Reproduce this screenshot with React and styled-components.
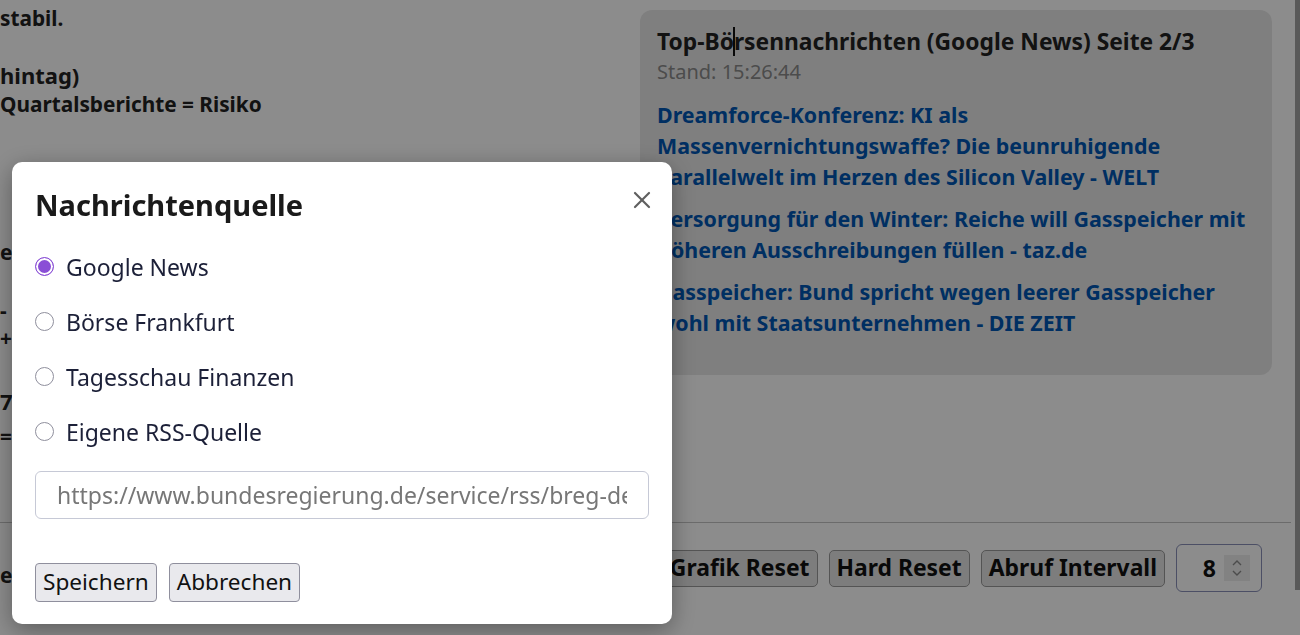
import React from "react";
import styled, { createGlobalStyle } from "styled-components";

const Global = createGlobalStyle`
  html, body {
    margin: 0;
    padding: 0;
    background: #ffffff;
    font-family: "Noto Sans", "Open Sans", sans-serif;
    color: #222;
  }
  * { box-sizing: border-box; }
`;

const Viewport = styled.div`
  height: 100vh;
  overflow: hidden;
  display: flex;
`;

const ScrollTrack = styled.div`
  width: 5px;
  flex: none;
`;

const ScrollThumb = styled.div`
  height: 590px;
  background: #a3a3a3;
`;

const Page = styled.div`
  flex: 1;
  min-width: 0;
  display: flex;
  flex-direction: column;
`;

const Main = styled.div`
  display: grid;
  grid-template-columns: 1fr 632px;
  column-gap: 40px;
  padding: 10px 23px 0 0;
  height: 522px;
`;

const LeftCol = styled.div`
  margin: -6px 0 0 -302px;
  white-space: nowrap;
`;

/* label column is scrolled out of view on the left, only the values show */
const InfoRow = styled.div`
  display: grid;
  grid-template-columns: 302px auto;
  font-size: ${(p) => (p.$heading ? 22 : 20.8)}px;
  font-weight: 700;
  line-height: ${(p) => (p.$heading ? 30 : 28)}px;
  margin-top: ${(p) => p.$gap || 0}px;
`;

const InfoLabel = styled.span`
  overflow: hidden;
`;

const Card = styled.section`
  background: #e8e8e8;
  border-radius: 12px;
  padding: 17px 16px 37px 17px;
  align-self: start;
`;

const CardTitle = styled.h2`
  margin: 0;
  font-size: 22.8px;
  font-weight: 700;
  line-height: 30px;
  color: #222;
`;

const Caret = styled.span`
  display: inline-block;
  width: 0;
  height: 29px;
  border-left: 2px solid #111;
  vertical-align: -6px;
  margin: 0 -1px;
`;

const Stand = styled.div`
  font-size: 20px;
  line-height: 28px;
  color: #8a8a8a;
  margin: 1px 0 13px;
`;

const NewsList = styled.ul`
  list-style: none;
  margin: 0;
  padding: 0;
  display: flex;
  flex-direction: column;
  gap: 11px;
`;

const NewsLink = styled.a`
  display: block;
  font-size: 21.4px;
  font-weight: 700;
  line-height: 31px;
  color: #0056b3;
  text-decoration: none;
`;

const Footer = styled.footer`
  border-top: 1px solid #c4c4c4;
  margin-right: 4px;
  display: flex;
  align-items: center;
  justify-content: space-between;
  padding: 21px 29px 0 0;
`;

const FooterLeft = styled.div`
  margin: 14px 0 0 -302px;
  white-space: nowrap;
`;

const FooterRight = styled.div`
  display: flex;
  align-items: center;
  gap: 11px;
`;

const ToolButton = styled.button`
  font-family: inherit;
  font-size: 22.9px;
  font-weight: 700;
  color: #111;
  background: #e4e4e4;
  border: 1px solid #9a9a9a;
  border-radius: 5px;
  height: 37px;
  padding: 0 7px;
  line-height: 1;
`;

const NumberBox = styled.div`
  width: 86px;
  height: 48px;
  border: 1px solid #8a90b8;
  border-radius: 6px;
  display: flex;
  align-items: center;
  justify-content: flex-end;
  gap: 8px;
  padding-right: 11px;
  font-size: 23px;
  font-weight: 700;
  color: #111;
`;

const Spinner = styled.div`
  width: 26px;
  height: 26px;
  background: #ededed;
  display: flex;
  align-items: center;
  justify-content: center;
`;

const Overlay = styled.div`
  position: fixed;
  inset: 0;
  background: rgba(0, 0, 0, 0.45);
  display: flex;
  align-items: flex-start;
  padding: 162px 0 0 12px;
`;

const Modal = styled.div`
  width: 660px;
  background: #ffffff;
  border-radius: 10px;
  box-shadow: 0 6px 24px rgba(0, 0, 0, 0.35);
  padding: 24px 23px 22px;
  color: #1c2038;
`;

const ModalHeader = styled.div`
  display: flex;
  align-items: center;
  justify-content: space-between;
`;

const ModalTitle = styled.h2`
  margin: 0;
  font-size: 29px;
  font-weight: 700;
  line-height: 38px;
  color: #1a1a1a;
`;

const CloseButton = styled.button`
  background: none;
  border: none;
  padding: 0;
  width: 24px;
  height: 24px;
  display: flex;
  align-items: center;
  justify-content: center;
  margin-top: -10px;
  margin-right: -5px;
  cursor: pointer;
`;

const RadioList = styled.div`
  margin-top: 15px;
  display: flex;
  flex-direction: column;
`;

const RadioRow = styled.label`
  height: 55px;
  display: flex;
  align-items: center;
  gap: 12px;
  font-size: 23px;
  color: #1c2038;
  cursor: pointer;
`;

const Radio = styled.input.attrs({ type: "radio" })`
  appearance: none;
  margin: 0;
  width: 19px;
  height: 19px;
  border-radius: 50%;
  border: 1px solid #8f8f9d;
  background: #fff;
  flex: none;

  &:checked {
    border-color: #8a4fd6;
    background: #8a4fd6;
    box-shadow: inset 0 0 0 2px #fff;
  }
`;

const UrlInput = styled.input`
  margin-top: 12px;
  width: 100%;
  height: 48px;
  border: 1px solid #c6c9d6;
  border-radius: 6px;
  padding: 0 21px;
  font-family: inherit;
  font-size: 23px;
  color: #333;
  outline: none;

  &::placeholder {
    color: #777;
  }
`;

const ModalActions = styled.div`
  margin-top: 44px;
  display: flex;
  gap: 12px;
`;

const PlainButton = styled.button`
  font-family: inherit;
  font-size: 22.6px;
  color: #111;
  background: #e9e9ed;
  border: 1px solid #8f8f9d;
  border-radius: 4px;
  height: 39px;
  padding: 0 7px;
  line-height: 1;
`;

const leftRows = [
  { label: "Gesamtbild: Die Lage bleibt ", value: "stabil." },
  { label: "Wochenausblick (Nac", value: "hintag)", heading: true, gap: 28 },
  { label: "Achtung: Anstehende", value: " Quartalsberichte = Risiko" },
  { label: "Wichtige Indiz", value: "es im Überblick", gap: 120 },
  { label: "DAX", value: "- Leicht im Plus", gap: 30 },
  { label: "MDAX", value: "+0,4 %" },
  { label: "Kurs 1", value: "7,9 %", heading: true, gap: 34 },
  { label: "Signal ", value: "=Positiv", gap: 6 },
];

const news = [
  "Dreamforce-Konferenz: KI als Massenvernichtungswaffe? Die beunruhigende Parallelwelt im Herzen des Silicon Valley - WELT",
  "Versorgung für den Winter: Reiche will Gasspeicher mit höheren Ausschreibungen füllen - taz.de",
  "Gasspeicher: Bund spricht wegen leerer Gasspeicher wohl mit Staatsunternehmen - DIE ZEIT",
];

const sources = [
  "Google News",
  "Börse Frankfurt",
  "Tagesschau Finanzen",
  "Eigene RSS-Quelle",
];

export default function App() {
  return (
    <>
      <Global />
      <Viewport>
        <Page>
          <Main>
            <LeftCol>
              {leftRows.map((r) => (
                <InfoRow key={r.value} $heading={r.heading} $gap={r.gap}>
                  <InfoLabel>{r.label}</InfoLabel>
                  <span>{r.value}</span>
                </InfoRow>
              ))}
            </LeftCol>
            <Card>
              <CardTitle>
                Top-Bö<Caret />rsennachrichten (Google News) Seite 2/3
              </CardTitle>
              <Stand>Stand: 15:26:44</Stand>
              <NewsList>
                {news.map((n) => (
                  <li key={n}>
                    <NewsLink href="#">{n}</NewsLink>
                  </li>
                ))}
              </NewsList>
            </Card>
          </Main>
          <Footer>
            <FooterLeft>
              <InfoRow>
                <InfoLabel>Quelle wechs</InfoLabel>
                <span>eln</span>
              </InfoRow>
            </FooterLeft>
            <FooterRight>
              <ToolButton>Grafik Reset</ToolButton>
              <ToolButton>Hard Reset</ToolButton>
              <ToolButton>Abruf Intervall</ToolButton>
              <NumberBox>
                8
                <Spinner>
                  <svg width="12" height="20" viewBox="0 0 12 20" fill="none" stroke="#8a8a8a" strokeWidth="1.4">
                    <path d="M2 7 L6 3 L10 7" />
                    <path d="M2 13 L6 17 L10 13" />
                  </svg>
                </Spinner>
              </NumberBox>
            </FooterRight>
          </Footer>
        </Page>
        <ScrollTrack>
          <ScrollThumb />
        </ScrollTrack>
      </Viewport>
      <Overlay>
        <Modal>
          <ModalHeader>
            <ModalTitle>Nachrichtenquelle</ModalTitle>
            <CloseButton aria-label="Schließen">
              <svg width="18" height="18" viewBox="0 0 18 18" stroke="#5f5f5f" strokeWidth="2.2" strokeLinecap="round">
                <path d="M2 2 L16 16" />
                <path d="M16 2 L2 16" />
              </svg>
            </CloseButton>
          </ModalHeader>
          <RadioList>
            {sources.map((s, i) => (
              <RadioRow key={s}>
                <Radio name="src" defaultChecked={i === 0} />
                {s}
              </RadioRow>
            ))}
          </RadioList>
          <UrlInput placeholder="https://www.bundesregierung.de/service/rss/breg-de/1151244/feed.xml" />
          <ModalActions>
            <PlainButton>Speichern</PlainButton>
            <PlainButton>Abbrechen</PlainButton>
          </ModalActions>
        </Modal>
      </Overlay>
    </>
  );
}
